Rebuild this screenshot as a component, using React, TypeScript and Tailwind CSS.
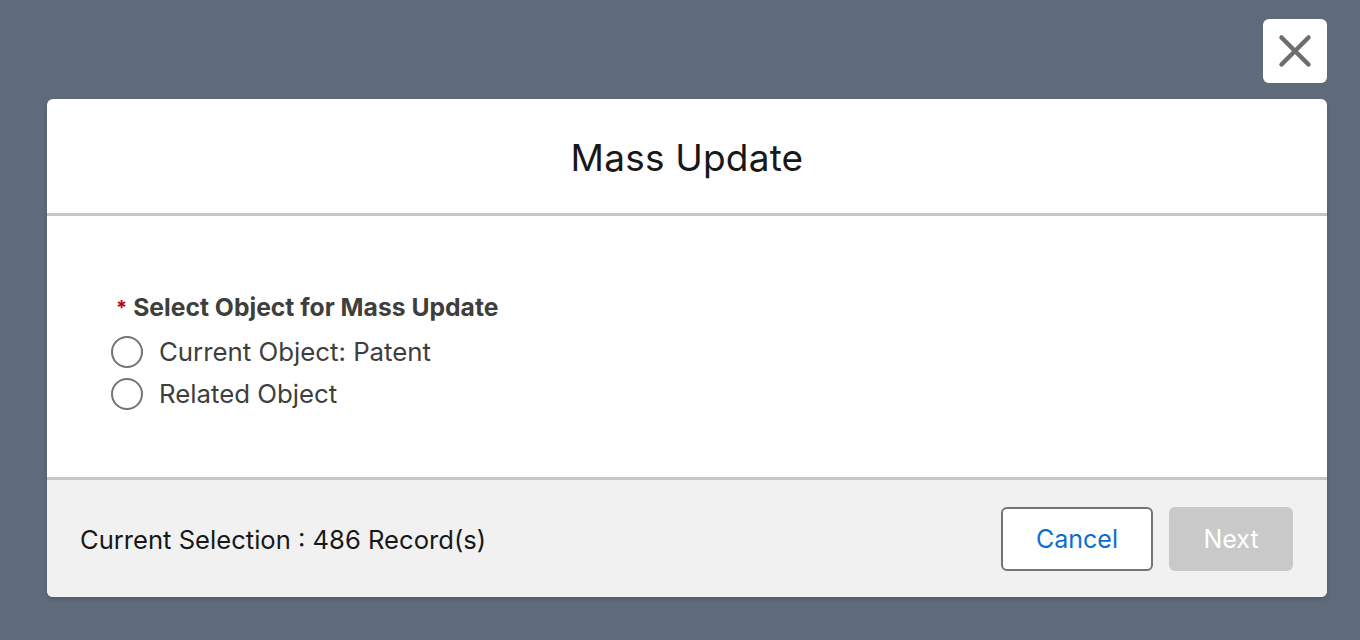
import React from "react";

function CloseIcon() {
  return (
    <svg viewBox="0 0 32 32" className="w-[36px] h-[36px]" fill="none">
      <path d="M4 4 L28 28 M28 4 L4 28" stroke="#6b6d70" strokeWidth="4" strokeLinecap="round" />
    </svg>
  );
}

function Radio({ label }: { label: string }) {
  return (
    <label className="flex items-center gap-[16px] h-[42px]">
      <span className="w-[32px] h-[32px] rounded-full border-2 border-[#747474] bg-white" />
      <span className="text-[25.8px] text-[#3e3e3c]">{label}</span>
    </label>
  );
}

export default function App() {
  return (
    <div
      className="w-[1360px] h-[640px] bg-[#5f6b7a] pt-[19px] overflow-hidden"
      style={{ fontFamily: "Inter, 'Liberation Sans', sans-serif" }}
    >
      {/* Close button */}
      <div className="flex justify-end pr-[33px]">
        <button className="w-[64px] h-[64px] bg-white rounded-[6px] flex items-center justify-center">
          <CloseIcon />
        </button>
      </div>

      {/* Modal */}
      <div className="ml-[47px] mt-[16px] w-[1280px] bg-white rounded-[6px] shadow-[0_2px_4px_rgba(0,0,0,0.16)] overflow-hidden">
        <div className="h-[117px] pt-[4px] flex items-center justify-center border-b-[3px] border-[#c6c6c6]">
          <h1 className="text-[37px] text-[#181818] tracking-[0.2px]">Mass Update</h1>
        </div>

        <div className="h-[264px] border-b-[3px] border-[#c6c6c6] pl-[64px] pt-[76px]">
          <div className="flex items-center text-[24.7px] font-bold text-[#3e3e3c] ml-[5px] h-[32px]">
            <span className="text-[#ba0517] text-[20px] mr-[6px]">*</span>
            Select Object for Mass Update
          </div>
          <div className="mt-[7px] flex flex-col">
            <Radio label="Current Object: Patent" />
            <Radio label="Related Object" />
          </div>
        </div>

        <div className="h-[117px] bg-[#f1f1f1] flex items-center justify-between pl-[33px] pr-[34px]">
          <span className="pt-[4px] text-[25.6px] text-[#181818]">Current Selection : 486 Record(s)</span>
          <div className="flex gap-[16px]">
            <button className="w-[152px] h-[64px] pt-[3px] rounded-[6px] border-2 border-[#747474] bg-white text-[25px] text-[#0b6fd1]">
              Cancel
            </button>
            <button className="w-[124px] h-[64px] pt-[3px] rounded-[6px] bg-[#c9c9c9] text-[25px] text-white">
              Next
            </button>
          </div>
        </div>
      </div>
    </div>
  );
}
